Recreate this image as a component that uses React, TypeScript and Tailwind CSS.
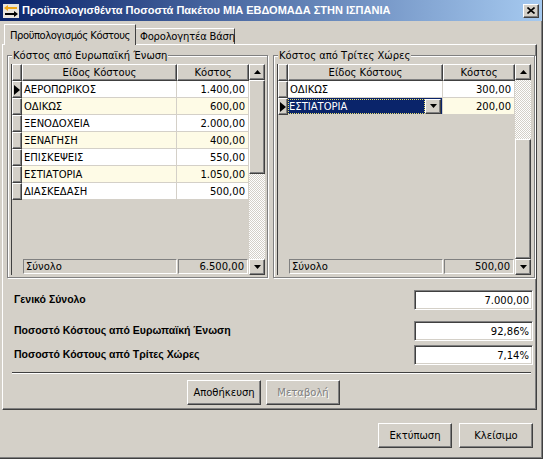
"use client"

import React from "react"

type CostRow = {
  name: string
  cost: string
}

const euRows: CostRow[] = [
  { name: "ΑΕΡΟΠΩΡΙΚΟΣ", cost: "1.400,00" },
  { name: "ΟΔΙΚΩΣ", cost: "600,00" },
  { name: "ΞΕΝΟΔΟΧΕΙΑ", cost: "2.000,00" },
  { name: "ΞΕΝΑΓΗΣΗ", cost: "400,00" },
  { name: "ΕΠΙΣΚΕΨΕΙΣ", cost: "550,00" },
  { name: "ΕΣΤΙΑΤΟΡΙΑ", cost: "1.050,00" },
  { name: "ΔΙΑΣΚΕΔΑΣΗ", cost: "500,00" },
]

const otherRows: CostRow[] = [
  { name: "ΟΔΙΚΩΣ", cost: "300,00" },
  { name: "ΕΣΤΙΑΤΟΡΙΑ", cost: "200,00" },
]

// classic win32 bevels
const raised =
  "bg-[#d4d0c8] border border-t-white border-l-white border-r-[#404040] border-b-[#404040] shadow-[inset_-1px_-1px_0_#808080]"
const field =
  "bg-white border border-t-[#808080] border-l-[#808080] border-r-white border-b-white shadow-[inset_1px_1px_0_#404040,inset_-1px_-1px_0_#d4d0c8]"
const checkered =
  "bg-[repeating-conic-gradient(#d4d0c8_0_25%,#ffffff_0_50%)] bg-size-[2px_2px]"
const boldFont = "font-['Liberation_Sans',Arial,sans-serif] font-bold"

function cn(...parts: (string | false | undefined)[]) {
  return parts.filter(Boolean).join(" ")
}

function Arrow({ dir }: { dir: "up" | "down" }) {
  return (
    <svg width="7" height="4" viewBox="0 0 7 4">
      <polygon points={dir === "up" ? "3.5,0 7,4 0,4" : "0,0 7,0 3.5,4"} fill="#000" />
    </svg>
  )
}

function ScrollBar({ thumbFirst }: { thumbFirst: boolean }) {
  return (
    <div className="flex w-[16px] shrink-0 flex-col">
      <div className={cn(raised, "flex h-[16px] items-center justify-center")}>
        <Arrow dir="up" />
      </div>
      {thumbFirst ? (
        <div className="flex flex-1 flex-col">
          <div className={cn(raised, "h-[94px]")} />
          <div className={cn(checkered, "flex-1")} />
        </div>
      ) : (
        <div className="flex flex-1 flex-col">
          <div className={cn(checkered, "h-[59px]")} />
          <div className={cn(raised, "flex-1")} />
        </div>
      )}
      <div className={cn(raised, "flex h-[16px] items-center justify-center")}>
        <Arrow dir="down" />
      </div>
    </div>
  )
}

function CostGrid({
  rows,
  total,
  current,
  editing,
  thumbFirst,
}: {
  rows: CostRow[]
  total: string
  current: number
  editing?: number
  thumbFirst: boolean
}) {
  return (
    <div className="flex h-[211px] w-[254px] bg-[#d4d0c8]">
      <div className="flex w-[238px] flex-col border-l border-[#404040]">
        {/* Header */}
        <div className="flex h-[17px]">
          <div className={cn(raised, "w-[10px]")} />
          <div className={cn(raised, "flex w-[155px] items-center justify-center")}>Είδος Κόστους</div>
          <div className={cn(raised, "flex w-[72px] items-center justify-center")}>Κόστος</div>
        </div>

        {/* Rows */}
        {rows.map((row, i) => {
          const bg = i % 2 === 0 ? "bg-white" : "bg-[#fefbe6]"
          const isEditing = editing === i
          return (
            <div key={row.name} className="flex h-[17px]">
              <div className={cn(raised, "flex w-[10px] items-center pl-[1px]")}>
                {current === i && (
                  <svg width="7" height="10" viewBox="0 0 7 10">
                    <polygon points="0,0 6,5 0,10" fill="#000" />
                  </svg>
                )}
              </div>
              {isEditing ? (
                <div className="flex w-[155px] items-center border-r border-b border-[#d4d0c8] bg-[#0a246a]">
                  <span className="flex h-[15px] flex-1 items-center pl-[1px] text-white outline-1 -outline-offset-1 outline-[#e8e070] outline-dotted">
                    {row.name}
                  </span>
                  <div className={cn(raised, "mr-[1px] flex h-[15px] w-[16px] items-center justify-center")}>
                    <Arrow dir="down" />
                  </div>
                </div>
              ) : (
                <div className={cn(bg, "flex w-[155px] items-center border-r border-b border-[#d4d0c8] pl-[2px]")}>
                  {row.name}
                </div>
              )}
              <div className={cn(bg, "flex w-[72px] items-center justify-end border-r border-b border-[#d4d0c8] pr-[3px]")}>
                {row.cost}
              </div>
            </div>
          )
        })}

        <div className="flex-1" />

        {/* Totals */}
        <div className="mb-[1px] flex h-[15px]">
          <div className="w-[11px]" />
          <div className="flex w-[154px] items-center border border-t-[#808080] border-l-[#808080] border-r-white border-b-white pl-[2px]">
            Σύνολο
          </div>
          <div className="ml-[1px] flex w-[70px] items-center justify-end border border-t-[#808080] border-l-[#808080] border-r-white border-b-white pr-[3px]">
            {total}
          </div>
        </div>
      </div>
      <ScrollBar thumbFirst={thumbFirst} />
    </div>
  )
}

function GroupBox({ label, width, children }: { label: string; width: string; children: React.ReactNode }) {
  return (
    <div
      className={cn(
        "relative h-[223px] border border-[#808080] pt-[8px] pl-[3px] shadow-[inset_1px_1px_0_#fff,1px_1px_0_#fff]",
        width
      )}
    >
      {/* Caption sits over the etched border */}
      <span className="absolute -top-[7px] left-[4px] bg-[#d4d0c8] px-[1px] leading-[13px] whitespace-nowrap">{label}</span>
      {children}
    </div>
  )
}

function Button({ children, disabled }: { children: React.ReactNode; disabled?: boolean }) {
  return (
    <button
      type="button"
      className={cn(
        raised,
        "flex h-[25px] w-[74px] items-center justify-center",
        disabled && "text-[#808080] [text-shadow:1px_1px_0_#fff]"
      )}
    >
      {children}
    </button>
  )
}

export default function App() {
  return (
    <div className="flex h-[459px] w-[543px] flex-col border-r border-b border-[#404040] bg-[#d4d0c8] font-['DejaVu_Sans',sans-serif] text-[10px] text-black shadow-[inset_-1px_-1px_0_#808080]">
      {/* Title bar */}
      <div className="flex h-[21px] items-center bg-[linear-gradient(to_right,#0a246a,#a6caf0)] pr-[3px] pl-[3px]">
        <svg width="16" height="16" viewBox="0 0 16 16">
          <rect x="0" y="1" width="16" height="14" fill="#e8e4dc" />
          <polygon points="1,5 5,2 5,4 14,4 14,6 5,6 5,8" fill="#f0a818" />
          <polygon points="15,11 11,8 11,10 2,10 2,12 11,12 11,14" fill="#000" />
        </svg>
        <span className={cn(boldFont, "ml-[3px] flex-1 text-[11px] whitespace-nowrap text-white")}>
          Προϋπολογισθέντα Ποσοστά Πακέτου ΜΙΑ ΕΒΔΟΜΑΔΑ ΣΤΗΝ ΙΣΠΑΝΙΑ
        </span>
        <div className={cn(raised, "flex h-[14px] w-[16px] items-center justify-center")}>
          <svg width="8" height="7" viewBox="0 0 8 7">
            <path d="M0.5 0.5 L7.5 6.5 M7.5 0.5 L0.5 6.5" stroke="#000" strokeWidth="1.6" />
          </svg>
        </div>
      </div>

      {/* Tabs */}
      <div className="mt-[3px] flex items-end pl-[4px]">
        <div className="relative z-10 -mb-[1px] flex h-[21px] w-[132px] items-center border-t border-r border-l border-t-white border-r-[#404040] border-l-white bg-[#d4d0c8] pl-[5px] tracking-[-0.45px] whitespace-nowrap">
          Προϋπολογισμός Κόστους
        </div>
        <div className="flex h-[16px] w-[99px] items-center border-t border-r border-t-white border-r-[#404040] pl-[4px] tracking-[-0.2px] whitespace-nowrap">
          Φορολογητέα Βάση
        </div>
      </div>

      {/* Tab page */}
      <div className="mr-[5px] ml-[2px] flex h-[366px] flex-col border border-t-white border-r-[#404040] border-b-[#404040] border-l-white pt-[10px] pl-[4px] shadow-[inset_-1px_-1px_0_#808080]">
        <div className="flex gap-[5px]">
          <GroupBox label="Κόστος από Ευρωπαϊκή Ένωση" width="w-[261px]">
            <CostGrid rows={euRows} total="6.500,00" current={0} thumbFirst />
          </GroupBox>
          <GroupBox label="Κόστος από Τρίτες Χώρες" width="w-[262px]">
            <CostGrid rows={otherRows} total="500,00" current={1} editing={1} thumbFirst={false} />
          </GroupBox>
        </div>

        <div className="mt-[12px] flex flex-col pr-[3px] pl-[7px]">
          <div className="flex items-center justify-between">
            <span className={cn(boldFont, "text-[10.5px]")}>Γενικό Σύνολο</span>
            <div className={cn(field, "flex h-[20px] w-[119px] items-center justify-end pr-[3px]")}>7.000,00</div>
          </div>
          <div className="mt-[11px] flex items-center justify-between">
            <span className={cn(boldFont, "text-[10.5px]")}>Ποσοστό Κόστους από Ευρωπαϊκή Ένωση</span>
            <div className={cn(field, "flex h-[20px] w-[119px] items-center justify-end pr-[3px]")}>92,86%</div>
          </div>
          <div className="mt-[4px] flex items-center justify-between">
            <span className={cn(boldFont, "text-[10.5px]")}>Ποσοστό Κόστους από Τρίτες Χώρες</span>
            <div className={cn(field, "flex h-[20px] w-[119px] items-center justify-end pr-[3px]")}>7,14%</div>
          </div>
        </div>

        <div className="mt-[7px] mr-[5px] ml-[5px] h-[2px] border-t border-b border-t-[#404040] border-b-white" />

        <div className="mt-[6px] flex justify-center gap-[5px] pr-[16px]">
          <Button>Αποθήκευση</Button>
          <Button disabled>Μεταβολή</Button>
        </div>
      </div>

      {/* Dialog buttons */}
      <div className="mt-[13px] flex justify-end gap-[7px] pr-[9px]">
        <Button>Εκτύπωση</Button>
        <Button>Κλείσιμο</Button>
      </div>
    </div>
  )
}
